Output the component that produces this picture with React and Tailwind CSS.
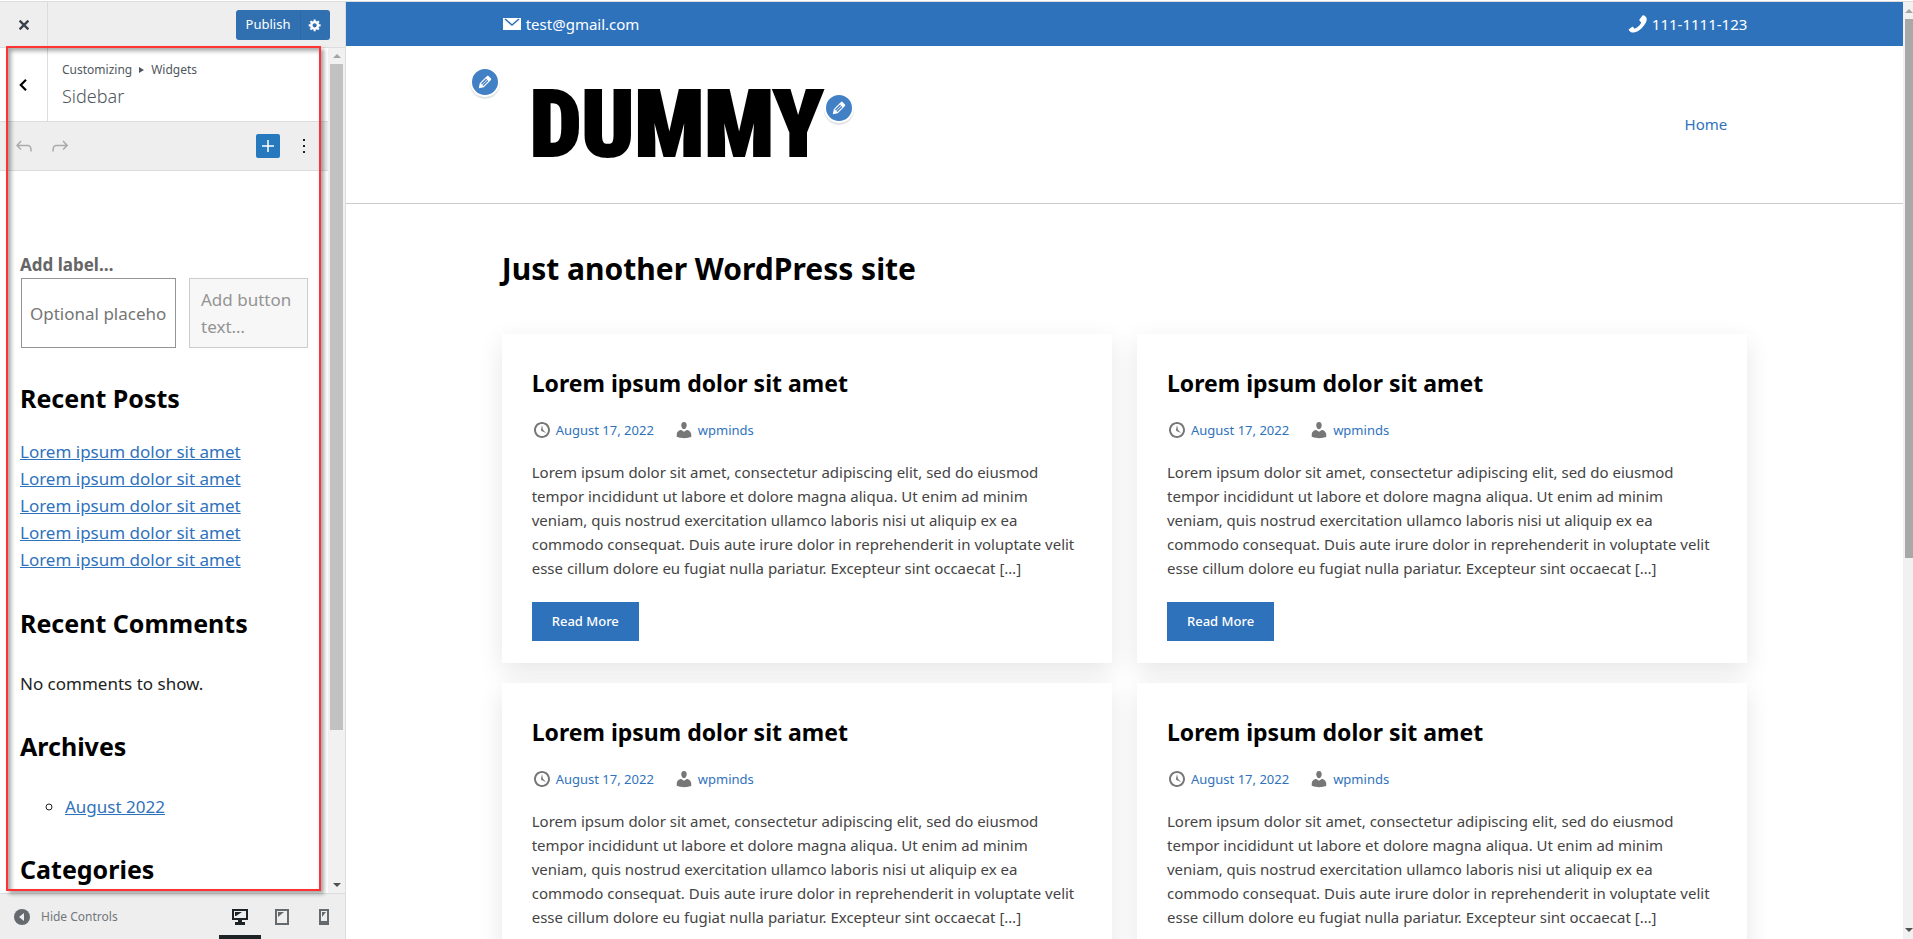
import React from 'react';

const sidebarPosts = [1, 2, 3, 4, 5];
const posts = [1, 2, 3, 4];

const ScrollArrow = ({ down, color }) => (
  <svg viewBox="0 0 8 4" className={`w-2 h-1 shrink-0 ${down ? 'rotate-180' : ''}`} fill={color}>
    <path d="M4 0l4 4H0z" />
  </svg>
);

const EditShortcut = ({ label, className }) => (
  <button aria-label={label} className={`absolute flex items-center justify-center w-[30px] h-[30px] rounded-full border-2 border-white bg-[#4180c4] shadow-[0_2px_1px_rgba(46,68,83,0.15)] ${className}`}>
    <svg viewBox="0 0 20 20" className="w-[18px] h-[18px]" fill="#fff">
      <path d="M13.89 3.39l2.71 2.72c.46.46.42 1.24.03 1.64l-8.01 8.02-5.56 1.16 1.16-5.58s7.6-7.63 7.99-8.03c.39-.39 1.22-.39 1.68.07zm-2.73 2.79l-5.59 5.61 1.11 1.11 5.54-5.65zm-2.97 8.23l5.58-5.6-1.07-1.08-5.59 5.6z" />
    </svg>
  </button>
);

const WidgetTitle = ({ children }) => (
  <h2 className="text-[25px] leading-9 font-bold text-black">{children}</h2>
);

const Sidebar = () => {
  return (
    <aside className="relative flex flex-col w-[346px] shrink-0 h-full border-r border-[#dcdcde] bg-[#eee] text-[#50575e]">
      <div className="flex items-center h-[46px] shrink-0 border-b border-[#dcdcde] pr-[15px]">
        <button aria-label="Close" className="flex items-center justify-center w-12 h-full border-r border-[#dcdcde]">
          <svg viewBox="0 0 10 10" className="w-[10px] h-[10px]" stroke="#3c434a" strokeWidth="2.4">
            <path d="M0.6 0.6l8.8 8.8M9.4 0.6L0.6 9.4" />
          </svg>
        </button>
        <div className="flex ml-auto h-[30px] rounded-[3px] overflow-hidden bg-[#3070b1] text-white">
          <button className="w-16 text-[13px]">Publish</button>
          <button aria-label="Publish settings" className="flex items-center justify-center w-[30px] pr-[2px] border-l border-[#2c69a8]">
            <svg viewBox="0 0 20 20" className="w-[14px] h-[14px]" fill="#fff">
              <path d="M18 12h-2.18c-.17.7-.44 1.35-.81 1.93l1.54 1.54-2.1 2.1-1.54-1.54c-.58.36-1.23.63-1.91.79V19H8v-2.18c-.68-.16-1.33-.43-1.91-.79l-1.54 1.54-2.12-2.12 1.54-1.54c-.36-.58-.63-1.23-.79-1.91H1V9.03h2.17c.16-.7.44-1.35.8-1.94L2.43 5.55l2.1-2.1 1.54 1.54c.58-.37 1.24-.64 1.93-.81V2h3v2.18c.68.16 1.33.43 1.91.79l1.54-1.54 2.12 2.12-1.54 1.54c.36.59.64 1.24.8 1.94H18V12zm-8.5 1.5c1.66 0 3-1.34 3-3s-1.34-3-3-3-3 1.34-3 3 1.34 3 3 3z" />
            </svg>
          </button>
        </div>
      </div>

      <div className="flex flex-1 min-h-0">
        <div className="flex-1 min-w-0 overflow-hidden bg-white">
          <div className="flex h-[74px] border-b border-[#dcdcde]">
            <button aria-label="Back" className="flex items-center justify-center w-12 pr-[2px] border-r border-[#dcdcde]">
              <svg viewBox="0 0 8 12" className="w-2 h-3" fill="none" stroke="#000" strokeWidth="2.2">
                <path d="M7 0.8L1.8 6L7 11.2" />
              </svg>
            </button>
            <h3 className="pl-[14px] pt-3">
              <span className="flex items-center gap-[7px] text-xs leading-5">
                Customizing
                <svg viewBox="0 0 5 6" className="w-[5px] h-[6px]" fill="#50575e"><path d="M0 0l5 3-5 3z" /></svg>
                Widgets
              </span>
              <span className="block text-lg leading-8 font-light">Sidebar</span>
            </h3>
          </div>

          <div className="flex items-center h-[49px] border-b border-[#dcdcde] bg-[#eee] pl-3 pr-4">
            <button aria-label="Undo" className="w-6 h-6">
              <svg viewBox="0 0 24 24" fill="#aaa"><path d="M18.3 11.7c-.6-.6-1.4-.9-2.3-.9H6.7l2.9-3.3-1.1-1-4.5 5L8.5 16l1-1-2.7-2.7H16c.5 0 .9.2 1.3.5 1 1 1 3.4 1 4.500v.3h1.500v-.2c0-1.500 0-4.300-1.500-5.700z" /></svg>
            </button>
            <button aria-label="Redo" className="w-6 h-6 ml-3">
              <svg viewBox="0 0 24 24" fill="#aaa"><path d="M15.6 6.5l-1.1 1 2.9 3.3H8c-.9 0-1.7.3-2.3.9-1.4 1.5-1.4 4.2-1.4 5.6v.2h1.5v-.3c0-1.1 0-3.5 1-4.5.3-.3.7-.5 1.3-.5h9.2L14.5 15l1.1 1.1 4.6-4.6-4.6-5z" /></svg>
            </button>
            <button aria-label="Add block" className="flex items-center justify-center w-6 h-6 ml-auto rounded-xs bg-[#2679bc]">
              <svg viewBox="0 0 12 12" className="w-3 h-3" stroke="#fff" strokeWidth="1.5"><path d="M6 0v12M0 6h12" /></svg>
            </button>
            <button aria-label="Options" className="flex items-center justify-center w-4 h-6 ml-4">
              <svg viewBox="0 0 2 14" className="w-[2px] h-[14px]" fill="#1e1e1e"><path d="M0 0h2v2H0zM0 6h2v2H0zM0 12h2v2H0z" /></svg>
            </button>
          </div>

          <div className="pt-20 px-5 text-[17px] leading-[27px] text-[#222]">
            <label htmlFor="placeholder" className="block font-bold text-[#666]">Add label…</label>
            <div className="flex gap-[13px]">
              <input id="placeholder" type="text" placeholder="Optional placeholder…" className="flex-1 min-w-0 h-[70px] ml-px border border-[#949494] px-2 placeholder:text-[#757575]" />
              <button className="w-[119px] border border-[#ccc] bg-[#f7f7f7] px-[11px] text-left text-[#949494]">Add button text…</button>
            </div>

            <div className="mt-8"><WidgetTitle>Recent Posts</WidgetTitle></div>
            <ul className="mt-[22px]">
              {sidebarPosts.map((post) => (
                <li key={post}><a href="#" className="text-[#2f72bc] underline">Lorem ipsum dolor sit amet</a></li>
              ))}
            </ul>

            <div className="mt-8"><WidgetTitle>Recent Comments</WidgetTitle></div>
            <p className="mt-[29px]">No comments to show.</p>

            <div className="mt-[31px]"><WidgetTitle>Archives</WidgetTitle></div>
            <ul className="mt-[29px] pl-[45px] list-[circle]">
              <li><a href="#" className="text-[#2f72bc] underline">August 2022</a></li>
            </ul>

            <div className="mt-[31px]"><WidgetTitle>Categories</WidgetTitle></div>
          </div>
        </div>
        <div className="flex flex-col items-center w-[17px] bg-[#f1f1f1] py-[6px] justify-between">
          <ScrollArrow color="#a3a3a3" />
          <div className="w-[13px] flex-1 mt-[6px] mb-[153px] bg-[#c1c1c1]"></div>
          <ScrollArrow down color="#505050" />
        </div>
      </div>

      <div className="flex items-center h-[46px] shrink-0 border-t border-[#dcdcde] pl-[14px]">
        <button className="flex items-center gap-[11px] text-xs text-[#72777c]">
          <svg viewBox="0 0 16 16" className="w-4 h-4">
            <circle cx="8" cy="8" r="8" fill="#656a6f" />
            <path d="M10 4v8L5 8z" fill="#eee" />
          </svg>
          Hide Controls
        </button>
        <div className="flex ml-auto h-full">
          <button aria-label="Desktop preview" className="flex items-center justify-center w-[42px] border-b-4 border-[#1d2327] pt-1">
            <svg viewBox="0 0 16 16" className="w-4 h-4">
              <path d="M0 0h16v11h-6v2h3v3H3v-3h3v-2H0z" fill="#1d2327" />
              <path d="M2 2h12v7H2z" fill="#eee" />
              <path d="M3 3h7L4 7H3z" fill="#1d2327" />
            </svg>
          </button>
          <button aria-label="Tablet preview" className="flex items-center justify-center w-[42px]">
            <svg viewBox="0 0 14 16" className="w-[14px] h-4">
              <path d="M0 0h14v16H0z" fill="#656a6f" />
              <path d="M2 2h10v12H2z" fill="#eee" />
              <path d="M3 3h6L3 8z" fill="#656a6f" />
            </svg>
          </button>
          <button aria-label="Mobile preview" className="flex items-center justify-center w-[42px]">
            <svg viewBox="0 0 10 16" className="w-[10px] h-4">
              <path d="M0 0h10v16H0z" fill="#656a6f" />
              <path d="M2 2h6v10H2z" fill="#eee" />
              <path d="M3 3h4L3 8z" fill="#656a6f" />
            </svg>
          </button>
        </div>
      </div>

      {/* highlight around the widget panel */}
      <div className="pointer-events-none absolute left-[6px] right-6 top-11 bottom-12 border-2 border-[#ff3333] shadow-[3px_3px_4px_rgba(0,0,0,0.35),inset_3px_3px_4px_rgba(0,0,0,0.35)]"></div>
    </aside>
  );
};

const PostCard = () => (
  <article className="bg-white px-[30px] pt-[31px] pb-[22px] shadow-[0_8px_24px_rgba(0,0,0,0.1)]">
    <h2 className="text-[23px] leading-9 font-bold text-black">Lorem ipsum dolor sit amet</h2>
    <div className="flex items-center mt-[17px] text-[13px] leading-6 text-[#2f72bc]">
      <svg viewBox="0 0 20 20" className="w-5 h-5 mr-1" fill="#777">
        <path d="M10 2c4.42 0 8 3.58 8 8s-3.58 8-8 8-8-3.58-8-8 3.58-8 8-8zm0 14c3.31 0 6-2.69 6-6s-2.69-6-6-6-6 2.69-6 6 2.69 6 6 6zm-.71-5.29c.07.05.14.1.23.15l-.02.02L14 13l-3.03-3.19L10 5l-.97 4.81h.01c0 .02-.01.05-.02.09S9 9.97 9 10c0 .28.1.52.29.71z" />
      </svg>
      <a href="#">August 17, 2022</a>
      <svg viewBox="0 0 20 20" className="w-5 h-5 ml-5 mr-1" fill="#777">
        <path d="M10 9.25c-2.27 0-2.73-3.44-2.73-3.44C7 4.02 7.82 2 9.97 2c2.16 0 2.98 2.02 2.71 3.81 0 0-.41 3.44-2.68 3.44zm0 2.57L12.72 10c2.39 0 4.52 2.33 4.52 4.53v2.49s-3.65 1.13-7.24 1.13c-3.65 0-7.24-1.13-7.24-1.13v-2.49c0-2.25 1.94-4.48 4.47-4.48z" />
      </svg>
      <a href="#">wpminds</a>
    </div>
    <p className="mt-[18px] text-[15px] leading-6 text-[#444]">
      Lorem ipsum dolor sit amet, consectetur adipiscing elit, sed do eiusmod tempor incididunt ut labore et dolore magna aliqua. Ut enim ad minim veniam, quis nostrud exercitation ullamco laboris nisi ut aliquip ex ea commodo consequat. Duis aute irure dolor in reprehenderit in voluptate velit esse cillum dolore eu fugiat nulla pariatur. Excepteur sint occaecat […]
    </p>
    <a href="#" className="inline-block mt-[22px] px-5 text-[13px] leading-[39px] font-medium text-white bg-[#2f72bc]">Read More</a>
  </article>
);

const Preview = () => {
  return (
    <div className="flex flex-1 min-w-0 h-full">
      <main className="flex-1 min-w-0 overflow-hidden bg-white">
        <div className="bg-[#2f72bc] text-white text-[15px]">
          <div className="flex justify-between items-center w-4/5 mx-auto h-11">
            <a href="#" className="flex items-center gap-1">
              <svg viewBox="0 0 20 20" className="w-5 h-5" fill="#fff">
                <path d="M1 4h18v12H1z" />
                <path d="M3 5l7 6 7-6" fill="none" stroke="#2f72bc" strokeWidth="1.6" />
              </svg>
              test@gmail.com
            </a>
            <a href="#" className="flex items-center gap-1">
              <svg viewBox="0 0 20 20" className="w-5 h-5" fill="#fff">
                <path d="M14.5 1.6c.7-.7 1.5-.5 2.200.2l1.200 1.300c.9 1 1.100 2.700.4 4.500-.9 2.300-2.700 4.800-4.900 6.800-2.400 2.200-5 3.700-7.400 4.100-1.700.3-3.200-.1-4.300-1.200l-.6-.7c-.5-.6-.4-1 .1-1.500l2.500-1.900c.6-.5 1.100-.4 1.600.1l1.300 1.400c1.200-.3 2.700-1.300 4.100-2.600 1.300-1.300 2.200-2.600 2.500-3.700l-1.400-1.400c-.6-.6-.6-1.100-.1-1.700z" />
              </svg>
              111-1111-123
            </a>
          </div>
        </div>

        <header className="border-b border-[#ccc]">
          <div className="relative flex items-center justify-between w-4/5 mx-auto h-[157px] px-5">
            <EditShortcut label="Edit header" className="-left-8 top-[21px]" />
            <a href="#" className="relative ml-2">
              <span className="block text-[92px] leading-[120px] font-black text-black [-webkit-text-stroke:2px_#000] font-['Roboto_Condensed','Liberation_Sans_Narrow','DejaVu_Sans_Condensed',sans-serif]">DUMMY</span>
              <EditShortcut label="Edit logo" className="-right-[30px] top-7" />
            </a>
            <a href="#" className="text-[15px] text-[#2f72bc]">Home</a>
          </div>
        </header>

        <section className="w-4/5 mx-auto pt-10">
          <h1 className="text-3xl leading-[50px] font-bold text-black">Just another WordPress site</h1>
          <div className="grid grid-cols-2 gap-x-[25px] gap-y-5 mt-10">
            {posts.map((post) => <PostCard key={post} />)}
          </div>
        </section>
      </main>
      <div className="flex flex-col items-end w-[10px] overflow-hidden bg-[#f1f1f1] py-[7px]">
        <ScrollArrow color="#a3a3a3" />
        <div className="w-2 h-[539px] mt-[6px] mb-auto bg-[#a8a8a8]"></div>
        <ScrollArrow down color="#505050" />
      </div>
    </div>
  );
};

const App = () => {
  return (
    <div className="h-screen flex flex-col overflow-hidden bg-white font-['Noto_Sans','Open_Sans',sans-serif]">
      <div className="h-[2px] shrink-0 border-b border-[#dcdcde]"></div>
      <div className="flex flex-1 min-h-0">
        <Sidebar />
        <Preview />
      </div>
    </div>
  );
};

export default App;
